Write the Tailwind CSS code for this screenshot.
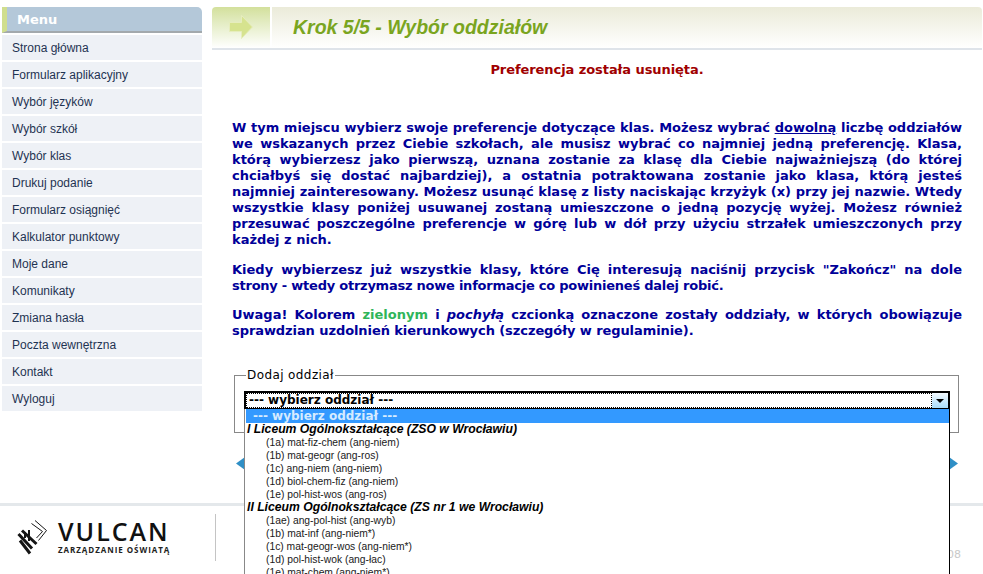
<!DOCTYPE html>
<html lang="pl">
<head>
<meta charset="UTF-8">
<title>Krok 5/5 - Wybór oddziałów</title>
<script src="https://cdn.jsdelivr.net/npm/@tailwindcss/browser@4"></script>
</head>
<body class="bg-white">
<div class="relative h-[574px] w-[983px] overflow-hidden bg-white font-['Liberation_Sans',sans-serif]">
  <div class="flex h-[503px] items-start pl-[2px] pt-[7px]">
    <!-- menu -->
    <div class="w-[200px] shrink-0">
      <div class="mb-[2px] flex h-[26px] items-center rounded-tr-[5px] border-b-2 border-[#a3a9ad] border-l-[5px] border-l-[#d0de8e] bg-[#b4c8d9] pl-[10px] pt-[1px] font-['DejaVu_Sans',sans-serif] text-[13px] font-bold text-white">Menu</div>
      <div class="flex flex-col gap-[2px] text-[12px] text-[#1f3352]">
        <a class="flex h-[25px] items-center bg-[#eef1f6] pl-[10px]">Strona główna</a>
        <a class="flex h-[25px] items-center bg-[#eef1f6] pl-[10px]">Formularz aplikacyjny</a>
        <a class="flex h-[25px] items-center bg-[#eef1f6] pl-[10px]">Wybór języków</a>
        <a class="flex h-[25px] items-center bg-[#eef1f6] pl-[10px]">Wybór szkół</a>
        <a class="flex h-[25px] items-center bg-[#eef1f6] pl-[10px]">Wybór klas</a>
        <a class="flex h-[25px] items-center bg-[#eef1f6] pl-[10px]">Drukuj podanie</a>
        <a class="flex h-[25px] items-center bg-[#eef1f6] pl-[10px]">Formularz osiągnięć</a>
        <a class="flex h-[25px] items-center bg-[#eef1f6] pl-[10px]">Kalkulator punktowy</a>
        <a class="flex h-[25px] items-center bg-[#eef1f6] pl-[10px]">Moje dane</a>
        <a class="flex h-[25px] items-center bg-[#eef1f6] pl-[10px]">Komunikaty</a>
        <a class="flex h-[25px] items-center bg-[#eef1f6] pl-[10px]">Zmiana hasła</a>
        <a class="flex h-[25px] items-center bg-[#eef1f6] pl-[10px]">Poczta wewnętrzna</a>
        <a class="flex h-[25px] items-center bg-[#eef1f6] pl-[10px]">Kontakt</a>
        <a class="flex h-[25px] items-center bg-[#eef1f6] pl-[10px]">Wyloguj</a>
      </div>
    </div>
    <!-- main -->
    <div class="ml-[10px] w-[770px] shrink-0">
      <div class="flex h-[43px] border-b-2 border-[#dfe4ea]">
        <div class="flex w-[58px] items-center justify-center rounded-tl-[4px] bg-gradient-to-b from-[#d3e09c] to-white pb-[2px]">
          <svg width="24" height="24" viewBox="0 0 24 24"><path d="M0.5 7.5H12.5V0.5L23.5 12L12.5 23.5V16.5H0.5Z" fill="#d6e38f" stroke="#e6edbd" stroke-width="1"/></svg>
        </div>
        <div class="ml-[2px] flex flex-1 items-center rounded-tr-[4px] bg-gradient-to-b from-[#ebebd9] to-white pl-[21px] text-[19.5px] font-bold italic text-[#7aa51f]">Krok 5/5 - Wybór oddziałów</div>
      </div>
      <p class="mt-[11px] text-center font-['DejaVu_Sans',sans-serif] text-[13px] font-bold leading-[18px] tracking-[-0.07px] text-[#a00000]">Preferencja została usunięta.</p>
      <div class="mt-[41px] px-[20px] font-['DejaVu_Sans',sans-serif] text-[13px] font-bold leading-[16px] text-[#000099]">
        <p class="text-justify">W tym miejscu wybierz swoje preferencje dotyczące klas. Możesz wybrać <u>dowolną</u> liczbę oddziałów we wskazanych przez Ciebie szkołach, ale musisz wybrać co najmniej jedną preferencję. Klasa, którą wybierzesz jako pierwszą, uznana zostanie za klasę dla Ciebie najważniejszą (do której chciałbyś się dostać najbardziej), a ostatnia potraktowana zostanie jako klasa, którą jesteś najmniej zainteresowany. Możesz usunąć klasę z listy naciskając krzyżyk (x) przy jej nazwie. Wtedy wszystkie klasy poniżej usuwanej zostaną umieszczone o jedną pozycję wyżej. Możesz również przesuwać poszczególne preferencje w górę lub w dół przy użyciu strzałek umieszczonych przy każdej z nich.</p>
        <p class="mt-[14px] text-justify">Kiedy wybierzesz już wszystkie klasy, które Cię interesują naciśnij przycisk "Zakończ" na dole <span class="tracking-[-0.24px]">strony - wtedy otrzymasz nowe informacje co powinieneś dalej robić.</span></p>
        <p class="mt-[13px] text-justify">Uwaga! Kolorem <span class="text-[#2fb55a]">zielonym</span> i <i>pochyłą</i> czcionką oznaczone zostały oddziały, w których obowiązuje <span class="tracking-[-0.08px]">sprawdzian uzdolnień kierunkowych (szczegóły w regulaminie).</span></p>
      </div>
      <fieldset class="ml-[22px] mt-[29px] h-[65px] w-[725px] border border-[#888888] px-[11px]">
        <legend class="px-[1px] font-['DejaVu_Sans',sans-serif] text-[12px] leading-[14px] tracking-[0.4px] text-black">Dodaj oddział</legend>
      </fieldset>
      <div class="ml-[24px] mt-[24px] flex w-[722px] justify-between">
        <svg width="9" height="13" viewBox="0 0 9 13"><path d="M9 0V13L0 6.5Z" fill="#2f8fc6"/></svg>
        <svg width="9" height="13" viewBox="0 0 9 13"><path d="M0 0V13L9 6.5Z" fill="#2f8fc6"/></svg>
      </div>
    </div>
  </div>
  <!-- footer -->
  <div class="flex h-[71px] items-start border-t-[3px] border-[#e4e8eb]">
    <div class="ml-[17px] mt-[14px] flex items-start">
      <svg width="33" height="36" viewBox="0 0 33 36" fill="none" stroke="#151515">
        <path d="M1.5 14L15 28.5M5 10.5L19.5 24M3 20.5L13 33.5" stroke-width="3"/>
        <path d="M8 12L8 18M12 10L12 21" stroke-width="2"/>
        <path d="M18 0.5L29.5 10.5L21.5 20.5M14.5 3.5L25.5 11.5L19.5 18" stroke-width="1"/>
      </svg>
      <div class="-mt-[2px] ml-[8px] w-[116px]">
        <div class="font-['Open_Sans',sans-serif] text-[25px] font-semibold leading-[26px] tracking-[2px] text-[#111111]">VULCAN</div>
        <div class="mt-[1px] whitespace-nowrap font-['Open_Sans',sans-serif] text-[8px] font-bold leading-[9px] tracking-[0.95px] text-[#222222]">ZARZĄDZANIE OŚWIATĄ</div>
      </div>
    </div>
    <div class="ml-[41px] mt-[8px] h-[47px] w-px bg-[#c4c4c4]"></div>
    <div class="ml-auto mr-[22px] mt-[41px] font-['DejaVu_Sans',sans-serif] text-[11px] text-[#c9c9c9]">08</div>
  </div>
  <!-- open select, lies over the page -->
  <div class="absolute left-[244px] top-[391px] w-[706px] font-['DejaVu_Sans',sans-serif] text-black">
    <div class="flex h-[18px] border-2 border-b border-black bg-white">
      <div class="flex-1 border border-dotted border-black pl-[2px] text-[12px] font-bold leading-[13px]">--- wybierz oddział ---</div>
      <div class="flex w-[16px] items-center justify-center bg-gradient-to-b from-[#f2f9fe] to-[#a9dcf9]">
        <svg width="8" height="4" viewBox="0 0 8 4"><path d="M0 0H8L4 4Z" fill="#000"/></svg>
      </div>
    </div>
    <div class="h-[170px] border-x border-x-black border-l-[#888888] bg-white pl-px text-[10.3px] leading-[13px]">
      <div class="h-[14px] bg-[#3399ff] pl-[7px] text-[12px] font-bold leading-[14px] text-[#d6ebff]">--- wybierz oddział ---</div>
      <div class="pl-[1px] font-['Liberation_Sans',sans-serif] text-[12.2px] font-bold italic">I Liceum Ogólnokształcące (ZSO w Wrocławiu)</div>
      <div class="pl-[20px] font-['Liberation_Sans',sans-serif] text-[#1a1a1a]">
        <div>(1a) mat-fiz-chem (ang-niem)</div>
        <div>(1b) mat-geogr (ang-ros)</div>
        <div>(1c) ang-niem (ang-niem)</div>
        <div>(1d) biol-chem-fiz (ang-niem)</div>
        <div>(1e) pol-hist-wos (ang-ros)</div>
      </div>
      <div class="pl-[1px] font-['Liberation_Sans',sans-serif] text-[12.2px] font-bold italic">II Liceum Ogólnokształcące (ZS nr 1 we Wrocławiu)</div>
      <div class="pl-[20px] font-['Liberation_Sans',sans-serif] text-[#1a1a1a]">
        <div>(1ae) ang-pol-hist (ang-wyb)</div>
        <div>(1b) mat-inf (ang-niem*)</div>
        <div>(1c) mat-geogr-wos (ang-niem*)</div>
        <div>(1d) pol-hist-wok (ang-łac)</div>
        <div>(1e) mat-chem (ang-niem*)</div>
      </div>
    </div>
  </div>
</div>
</body>
</html>
